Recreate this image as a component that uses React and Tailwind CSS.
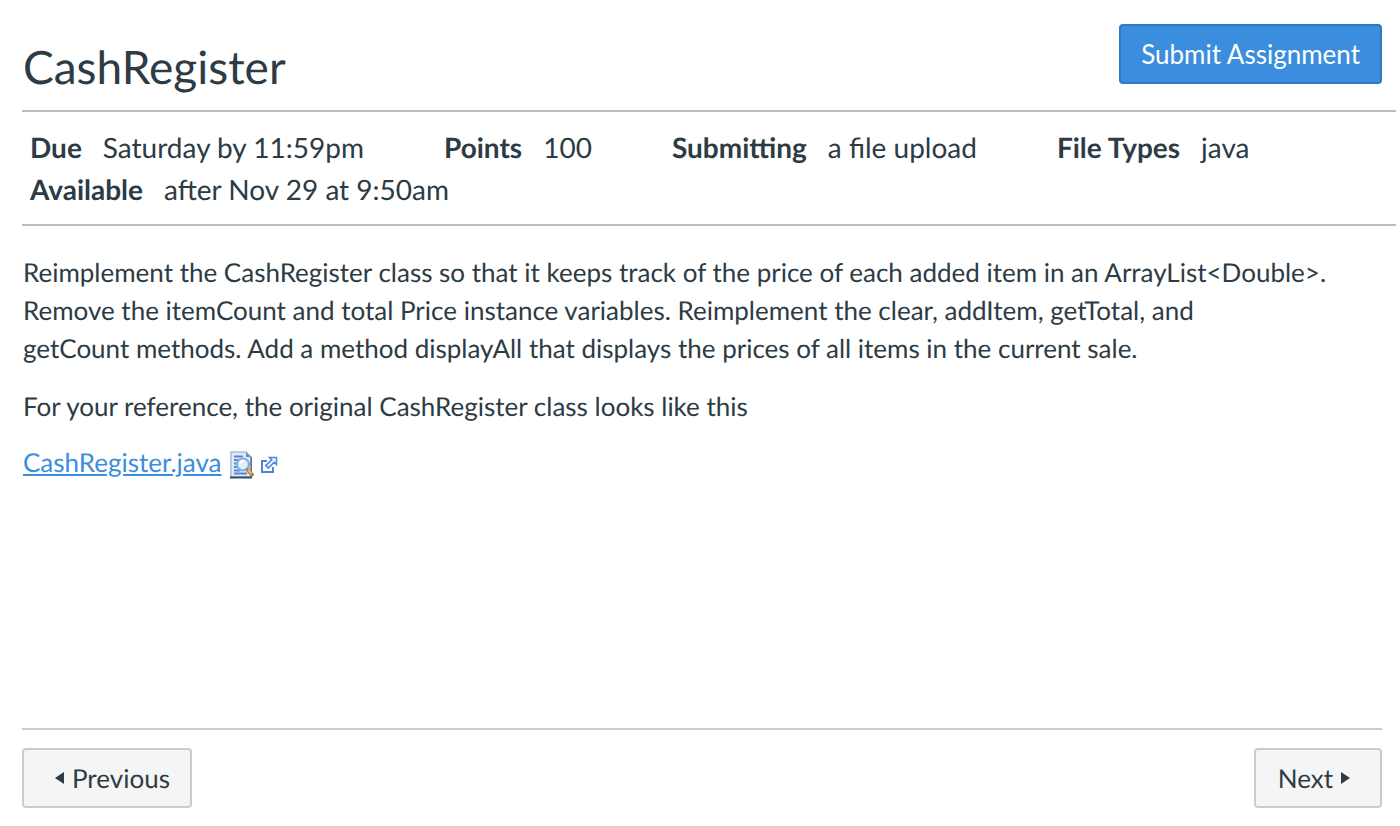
const details = [
  { label: "Due", value: "Saturday by 11:59pm" },
  { label: "Points", value: "100" },
  { label: "Submitting", value: "a file upload" },
  { label: "File Types", value: "java" },
  { label: "Available", value: "after Nov 29 at 9:50am" },
];

const PreviewIcon = () => (
  <svg width="24" height="28" viewBox="0 0 24 28" fill="none" aria-hidden="true">
    <path d="M1 1h15l5 5v20H1z" fill="#dce9f8" stroke="#a9bed6" strokeWidth="1.5" />
    <path d="M0 26.5h22" stroke="#2f4a6b" strokeWidth="2" />
    <path d="M21.2 6v20" stroke="#55708f" strokeWidth="1.5" />
    <path d="M16 1v5h5z" fill="#6f8dad" />
    <path d="M4 5.500h9M4 9h4M4 12.500h3M4 16h3M4 19.500h6M4 22.500h13" stroke="#5b88c4" strokeWidth="2" />
    <circle cx="13" cy="13.500" r="6" fill="#dcf0ff" stroke="#86aedd" strokeWidth="2.200" />
    <path d="M10 13a3.500 3.500 0 0 1 4-3" stroke="#fff" strokeWidth="2" />
    <path d="M17.500 18.500l4.500 5" stroke="#bd8046" strokeWidth="4" strokeLinecap="round" />
    <path d="M18 18.500l3.500 4" stroke="#f3c98b" strokeWidth="1.500" />
  </svg>
);

const ExternalIcon = () => (
  <svg width="18" height="18" viewBox="0 0 18 18" fill="none" stroke="#4a86dc" strokeWidth="2" aria-hidden="true">
    <path d="M7 5H2v11h11v-5" />
    <path
      d="M9.500 1.500h7v7l-2.300-2.300-5.900 5.900-2.500-2.500 5.900-5.900z"
      fill="#eaf3ff"
      strokeWidth="1.500"
    />
  </svg>
);

const App = () => (
  <div className="pt-6 pb-4 pl-[22px] pr-1 font-['Lato',sans-serif] text-[#2d3b45] [text-rendering:geometricPrecision]">
    <header className="flex h-[86px] justify-between pr-[14px]">
      <h1 className="px-px pt-3 text-[46px] leading-[62px]">CashRegister</h1>
      <button
        type="button"
        className="h-[60px] rounded border-2 border-[#2d7bc4] bg-[#3b8ede] px-5 text-[26px] text-white"
      >
        Submit Assignment
      </button>
    </header>

    <ul className="flex flex-wrap gap-x-20 border-y-2 border-[#bbb] px-2 py-[14px] text-[28px] leading-[42px]">
      {details.map(({ label, value }) => (
        <li key={label} className="flex gap-[21px]">
          <strong>{label}</strong>
          <span>{value}</span>
        </li>
      ))}
    </ul>

    <main className="min-h-[502px] pt-[27px] pr-[60px] pl-px text-[26px] leading-[38px]">
      <p className="mb-5">
        Reimplement the CashRegister class so that it keeps track of the price of each added item in
        an ArrayList&lt;Double&gt;. Remove the itemCount and total Price instance variables.
        Reimplement the clear, addItem, getTotal, and getCount&nbsp;methods. Add a method displayAll
        that displays the prices of all items in the current sale.
      </p>
      <p className="mb-[18px]">
        For your reference, the original CashRegister class looks like this
      </p>
      <p className="flex items-center">
        <a href="#file" className="text-[#3b8ede] underline">
          CashRegister.java
        </a>
        <a href="#preview" aria-label="Preview" className="ml-2 pt-1.5">
          <PreviewIcon />
        </a>
        <a href="#open" aria-label="Open" className="ml-1.5 pt-1.5">
          <ExternalIcon />
        </a>
      </p>
    </main>

    <nav className="mr-[14px] flex justify-between border-t-2 border-[#c7cdd1] pt-[18px] text-[26px]">
      <a
        href="#previous"
        className="flex h-[60px] items-center gap-2 rounded border-2 border-[#c7cdd1] bg-[#f5f5f5] pr-5 pl-[31px]"
      >
        <svg width="9" height="12" viewBox="0 0 9 12" fill="currentColor" aria-hidden="true">
          <path d="M9 0v12L0 6z" />
        </svg>
        Previous
      </a>
      <a
        href="#next"
        className="flex h-[60px] items-center gap-2 rounded border-2 border-[#c7cdd1] bg-[#f5f5f5] pr-[30px] pl-[22px]"
      >
        Next
        <svg width="9" height="12" viewBox="0 0 9 12" fill="currentColor" aria-hidden="true">
          <path d="M0 0v12l9-6z" />
        </svg>
      </a>
    </nav>
  </div>
);

export default App;
